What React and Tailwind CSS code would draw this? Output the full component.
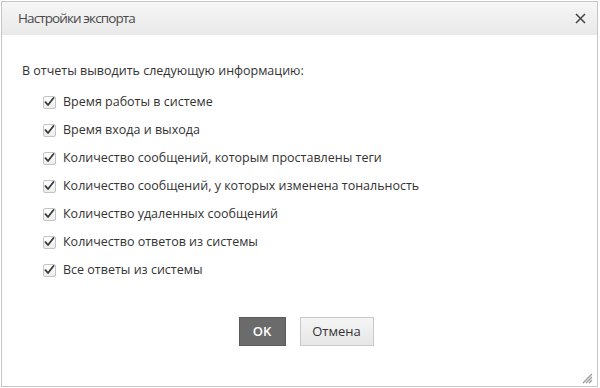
import React from "react";

const items = [
  "Время работы в системе",
  "Время входа и выхода",
  "Количество сообщений, которым проставлены теги",
  "Количество сообщений, у которых изменена тональность",
  "Количество удаленных сообщений",
  "Количество ответов из системы",
  "Все ответы из системы",
];

function Check() {
  return (
    <span className="flex h-[13px] w-[13px] items-center justify-center rounded-[2px] border border-[#c4c4c4] bg-gradient-to-b from-white to-[#ececec]">
      <svg width="11" height="10" viewBox="0 0 11 10">
        <path d="M1.5 5.2 L4 8 L9.5 1" fill="none" stroke="#3a3a3a" strokeWidth="1.8" strokeLinecap="round" strokeLinejoin="round" />
      </svg>
    </span>
  );
}

export default function App() {
  return (
    <div className="h-[388px] w-[600px] bg-white pl-px pt-px pr-[2px] pb-[1px] font-['Open_Sans',sans-serif]">
      <div className="relative flex h-full flex-col border border-[#c6c6c6] bg-white">
        <div className="flex h-[33px] items-center justify-between bg-gradient-to-b from-[#f6f6f6] to-[#e9e9e9] pl-[16px] pr-[10px]">
          <span className="text-[13.5px] tracking-[-0.9px] text-[#4a4a4a]">Настройки экспорта</span>
          <svg width="11" height="11" viewBox="0 0 11 11" className="mr-[1px]">
            <path d="M1 1 L10 10 M10 1 L1 10" stroke="#444" strokeWidth="1.5" />
          </svg>
        </div>
        <div className="flex flex-1 flex-col pl-[20px] pt-[28px]">
          <div className="text-[12.5px] leading-[16px] text-[#333]">В отчеты выводить следующую информацию:</div>
          <div className="mt-[9px] flex flex-col pl-[21px]">
            {items.map((t) => (
              <div key={t} className="flex h-[28px] items-center gap-[7px]">
                <Check />
                <span className="text-[12.5px] text-[#333]">{t}</span>
              </div>
            ))}
          </div>
          <div className="mt-[33px] flex justify-center gap-[14px] pr-[7px]">
            <button className="h-[29px] w-[47px] border border-[#5a5a5a] bg-[#6b6b6b] text-[13px] font-semibold text-white">OK</button>
            <button className="h-[29px] w-[74px] border border-[#c9c9c9] bg-gradient-to-b from-[#f5f5f5] to-[#e6e6e6] text-[13px] text-[#333]">Отмена</button>
          </div>
        </div>
        <svg width="11" height="11" viewBox="0 0 11 11" className="absolute bottom-[2px] right-[4px]">
          <path d="M10 1 L1 10 M10 4 L4 10 M10 7 L7 10" stroke="#999" strokeWidth="1.3" />
        </svg>
      </div>
    </div>
  );
}
